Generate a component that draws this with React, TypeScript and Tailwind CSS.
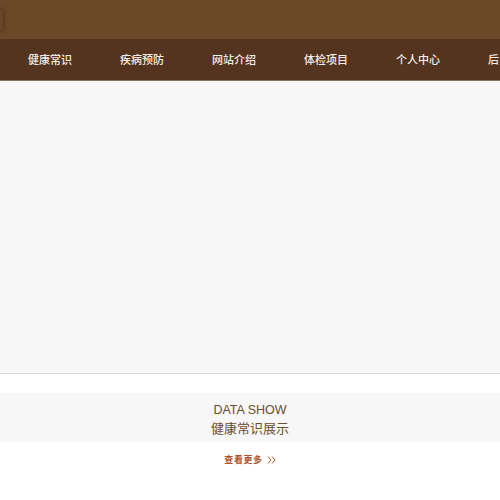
const navItems = ['健康常识', '疾病预防', '网站介绍', '体检项目', '个人中心', '后台管理'];

export default function App() {
  return (
    <div className="w-[500px] h-[500px] overflow-hidden bg-white font-['Noto_Sans_CJK_SC',sans-serif]">
      <header className="h-[39px] bg-[#6b4828] flex items-center">
        <div className="w-[4px] h-[24px] rounded-r-[4px] border border-l-0 border-[#5c3d21] bg-[#684626] shadow-[0_0_4px_rgba(0,0,0,0.25)]" />
      </header>
      <nav className="h-[42px] bg-[#55341f] border-b border-[#8c7262] flex items-center pl-[4px] pb-[1px] whitespace-nowrap">
        {navItems.map((item) => (
          <a key={item} className="px-[24px] text-[11px] font-medium text-[#f3ede7] shrink-0">
            {item}
          </a>
        ))}
      </nav>
      <section className="h-[293px] bg-[#f7f7f7] border-b border-[#d6d6d6]" />
      <div className="h-[19px]" />
      <section className="h-[49px] bg-[#f7f7f7] flex flex-col items-center justify-center pt-[2px] text-[#6b4d30] leading-[17px]">
        <div className="font-['Liberation_Sans',sans-serif] text-[12.5px]">DATA SHOW</div>
        <div className="text-[13px]">健康常识展示</div>
      </section>
      <div className="flex items-center justify-center gap-[4px] pt-[11px] text-[#b0552d]">
        <span className="text-[9px] font-bold tracking-[0.6px]">查看更多</span>
        <svg width="9" height="8" viewBox="0 0 9 8" fill="none" stroke="currentColor" strokeWidth="1">
          <path d="M1 0.5 L4 4 L1 7.5" />
          <path d="M5 0.5 L8 4 L5 7.5" />
        </svg>
      </div>
    </div>
  );
}
